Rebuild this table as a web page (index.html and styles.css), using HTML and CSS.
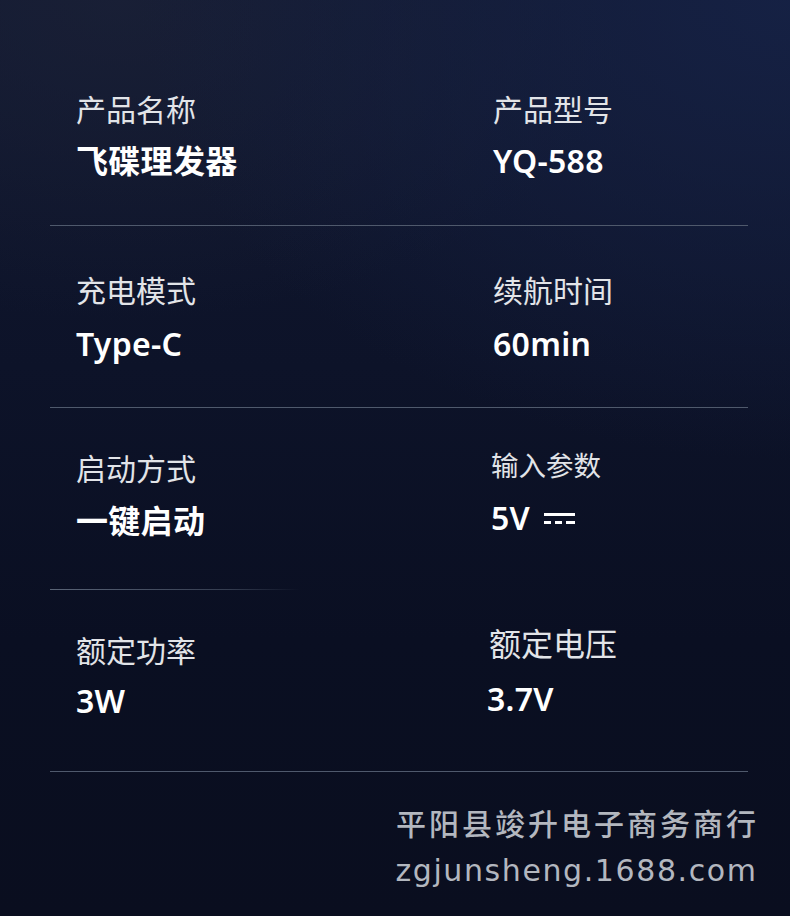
FILE: index.html
```html
<!DOCTYPE html>
<html lang="zh">
<head>
<meta charset="utf-8">
<link rel="stylesheet" href="styles.css">
</head>
<body>
<div class="page">
  <div class="specs">
    <div class="row r1">
      <div class="cell"><div class="label">产品名称</div><div class="value">飞碟理发器</div></div>
      <div class="cell"><div class="label">产品型号</div><div class="value">YQ-588</div></div>
    </div>
    <div class="row r2">
      <div class="cell"><div class="label">充电模式</div><div class="value">Type-C</div></div>
      <div class="cell"><div class="label">续航时间</div><div class="value">60min</div></div>
    </div>
    <div class="row r3 fade">
      <div class="cell"><div class="label">启动方式</div><div class="value">一键启动</div></div>
      <div class="cell shift2"><div class="label small">输入参数</div><div class="value">5V <svg class="dc" width="31" height="12" viewBox="0 0 31 12"><rect x="0" y="0" width="31" height="3" fill="#fff"/><rect x="0" y="8" width="7" height="3" fill="#fff"/><rect x="11" y="8" width="7" height="3" fill="#fff"/><rect x="22" y="8" width="9" height="3" fill="#fff"/></svg></div></div>
    </div>
    <div class="row r4">
      <div class="cell"><div class="label">额定功率</div><div class="value">3W</div></div>
      <div class="cell shift3"><div class="label large">额定电压</div><div class="value">3.7V</div></div>
    </div>
  </div>
  <div class="footer">
    <div class="company">平阳县竣升电子商务商行</div>
    <div class="url">zgjunsheng.1688.com</div>
  </div>
</div>
</body>
</html>
```
FILE: styles.css
```css
html, body {
  margin: 0;
  padding: 0;
}
body {
  width: 790px;
  height: 916px;
  overflow: hidden;
  font-family: "Noto Sans", "Noto Sans CJK SC", sans-serif;
}
.page {
  width: 790px;
  height: 916px;
  box-sizing: border-box;
  padding-top: 44px;
  background:
    radial-gradient(ellipse 650px 460px at 790px 0px, rgba(22, 34, 70, 0.9), rgba(22, 34, 70, 0) 100%),
    radial-gradient(ellipse 520px 320px at 120px 0px, rgba(28, 34, 56, 0.7), rgba(28, 34, 56, 0) 100%),
    linear-gradient(180deg, #111830 0%, #0d1329 40%, #0a0f22 70%, #0a0e1f 100%);
}
.specs {
  margin: 0 42px 0 50px;
}
.row {
  display: grid;
  grid-template-columns: 417px 1fr;
  padding-left: 26px;
  height: 182px;
  box-sizing: border-box;
  border-bottom: 1px solid #4f596c;
}
.row.fade {
  border-bottom: none;
  background: linear-gradient(90deg, #5a6476 0%, #4f596c 50px, rgba(79, 89, 108, 0.6) 180px, rgba(79, 89, 108, 0) 250px) no-repeat left bottom / 100% 1px;
}
.r1 { padding-top: 46px; }
.r2 { padding-top: 45px; }
.r3 { padding-top: 41px; }
.r4 { padding-top: 41px; }
.label {
  font-size: 30px;
  line-height: 40px;
  color: #e2e4e8;
  font-weight: 400;
}
.value {
  margin-top: 11px;
  font-size: 32px;
  line-height: 40px;
  color: #ffffff;
  font-weight: 600;
  display: flex;
  align-items: center;
  gap: 8px;
  letter-spacing: 0.3px;
}
.r2 .value { margin-top: 13px; }
.r3 .value { margin-top: 12px; }
.r4 .value { margin-top: 10px; }
.shift2 { margin-left: -2px; }
.shift2 .label { margin-top: -3px; }
.label.small { font-size: 27.5px; }
.shift2 .value { margin-top: 12px; }
.shift3 { margin-left: -6px; }
.shift3 .label { margin-top: -7px; margin-left: 2px; }
.label.large { font-size: 32px; }
.shift3 .value { margin-top: 15px; }
.dc { margin-left: 6px; margin-top: 2px; }
.footer {
  padding-top: 28px;
  padding-right: 34px;
  text-align: right;
  color: #b3b7bf;
}
.company {
  font-family: "Noto Sans CJK SC", sans-serif;
  font-size: 30px;
  line-height: 44px;
  letter-spacing: 3px;
  margin-right: -3px;
  font-weight: 500;
}
.url {
  font-family: "DejaVu Sans", sans-serif;
  font-size: 30px;
  line-height: 54px;
  letter-spacing: 1.6px;
  margin-right: -1.6px;
}
```
